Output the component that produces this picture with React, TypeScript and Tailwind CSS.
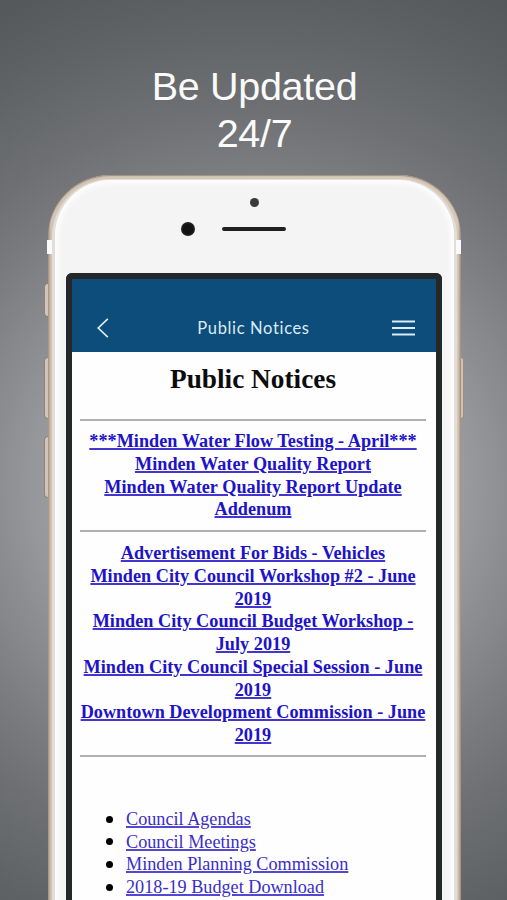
import React from 'react';

const waterLinks = [
    '***Minden Water Flow Testing - April***',
    'Minden Water Quality Report',
    'Minden Water Quality Report Update Addenum',
];

const councilLinks = [
    'Advertisement For Bids - Vehicles',
    'Minden City Council Workshop #2 - June 2019',
    'Minden City Council Budget Workshop - July 2019',
    'Minden City Council Special Session - June 2019',
    'Downtown Development Commission - June 2019',
];

const documentLinks = [
    'Council Agendas',
    'Council Meetings',
    'Minden Planning Commission',
    '2018-19 Budget Download',
];

const NavBar: React.FC = () => (
    <header className="flex h-[73px] items-end justify-between bg-[#0d4d7b] pr-[21px] pb-3 pl-[25px] text-[#dcebf7]">
        <button className="flex h-6 w-[23px] items-center" aria-label="Back">
            <svg width="12" height="20" viewBox="0 0 12 20" fill="none" stroke="currentColor" strokeWidth="1.7">
                <path d="M10.8 0.8 1.2 10l9.6 9.2" />
            </svg>
        </button>
        <h2 className="pr-[5px] font-['Lato',sans-serif] text-[16.5px] leading-6 tracking-[0.65px] whitespace-nowrap">
            Public Notices
        </h2>
        <button className="flex h-6 items-center" aria-label="Menu">
            <svg width="23" height="16" viewBox="0 0 23 16" stroke="currentColor" strokeWidth="2.2">
                <path d="M0 1.5h23M0 8h23M0 14.5h23" />
            </svg>
        </button>
    </header>
);

const LinkGroup: React.FC<{ links: string[] }> = ({ links }) => (
    <div className="text-center font-bold tracking-[0.03px]">
        {links.map((link) => (
            <div key={link}>
                <a href="#" className="text-[#2012c8] underline decoration-[#4236cf] decoration-[1.5px] underline-offset-1">
                    {link}
                </a>
            </div>
        ))}
    </div>
);

const Rule = () => <hr className="h-0.5 border-0 bg-[#b0b0b0]" />;

const Notices: React.FC = () => (
    <main className="flex flex-1 flex-col bg-[#fefefe] pt-3 pr-2.5 pl-2 font-['Liberation_Serif',serif] text-[18.2px] leading-[22.75px]">
        <h1 className="mb-6 text-center text-[27.3px] leading-[31px] font-bold text-[#0c0c0c]">Public Notices</h1>
        <Rule />
        <div className="py-[9px]">
            <LinkGroup links={waterLinks} />
        </div>
        <Rule />
        <div className="pt-2.5 pb-[8px]">
            <LinkGroup links={councilLinks} />
        </div>
        <Rule />
        <ul className="mt-[51px] pl-[26px]">
            {documentLinks.map((link) => (
                <li key={link} className="flex items-center gap-[13px]">
                    <span className="size-[7px] rounded-full bg-black" />
                    <a href="#" className="text-[#3a2dc8] underline decoration-[#5348d2] decoration-[1.5px] underline-offset-1">
                        {link}
                    </a>
                </li>
            ))}
        </ul>
    </main>
);

// Front camera, proximity sensor and earpiece above the display
const PhoneTop = () => (
    <div className="h-[92px] pt-[18px]">
        <div className="mx-auto size-[9px] rounded-full bg-[#3a3a3c]" />
        <div className="mt-[15px] flex items-center gap-[27px] pl-[115px]">
            <div className="size-3.5 rounded-full bg-[radial-gradient(circle,#121212_45%,#3a3a3a)]" />
            <div className="h-1 w-16 rounded-full bg-[#202020]" />
        </div>
    </div>
);

const sideButton = 'w-1 rounded-l-sm border border-r-0 border-[#8d8379] bg-[#cfc5bb]';

const Phone: React.FC = () => (
    <div className="flex">
        <div className="ml-11 flex w-1 flex-col pt-[108px]">
            <span className={`${sideButton} h-[34px]`} />
            <span className={`${sideButton} mt-10 h-[62px]`} />
            <span className={`${sideButton} mt-[17px] h-[62px]`} />
        </div>

        <div className="relative h-[800px] w-[413px] rounded-t-[62px] bg-[linear-gradient(to_right,#a4927f,#d3c5b5_3px,#d8c9b8_410px,#a08b7a)] px-1 pt-1 shadow-[inset_0_1px_1px_#a08d7c]">
            <div className="h-full rounded-t-[58px] bg-[#e1ddd9] px-[3px] pt-px">
                <div className="h-full rounded-t-[56px] bg-[#f4f4f4] pr-3 pl-[11px] shadow-[inset_0_0_6px_3px_#ffffff]">
                    <PhoneTop />
                    <div className="mt-px flex h-[640px] flex-col rounded-t-md border-x-[6px] border-t-[6px] border-[#242829]">
                        <NavBar />
                        <Notices />
                    </div>
                </div>
            </div>
            <span className="absolute top-[65px] -left-px h-3.5 w-[5px] bg-[#fafafa]" />
            <span className="absolute top-[65px] right-0 h-3.5 w-[5px] bg-[#fafafa]" />
        </div>

        <span className="mt-[182px] h-[62px] w-[3px] rounded-r-sm border border-l-0 border-[#9d8d82] bg-[#cfc0b6]" />
    </div>
);

export default function App() {
    return (
        <div className="h-[900px] w-[507px] overflow-hidden bg-[radial-gradient(ellipse_480px_470px_at_50%_54%,#9d9ea1_0%,#999a9d_44%,#8d8e91_53%,#7b7c80_68%,#6e7073_80%,#5f6265_100%,#55585b_115%)]">
            <h1 className="h-[175px] pt-[63px] pl-[2px] text-center font-['Liberation_Sans',sans-serif] text-[39.5px] leading-[46.5px] tracking-[-0.3px] text-[#fafafa]">
                Be Updated
                <br />
                24/7
            </h1>
            <Phone />
        </div>
    );
}
